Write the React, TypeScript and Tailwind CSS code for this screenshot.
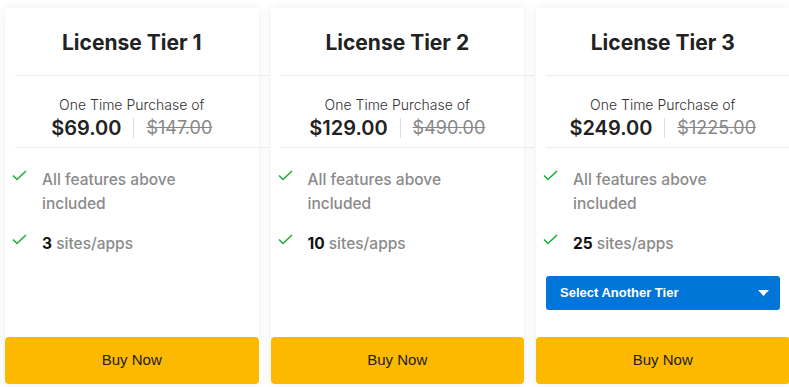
import { useState } from 'react'

interface Tier {
  id: string
  name: string
  price: string
  oldPrice: string
  sites: number
}

const tiers: Tier[] = [
  { id: '1', name: 'License Tier 1', price: '$69.00', oldPrice: '$147.00', sites: 3 },
  { id: '2', name: 'License Tier 2', price: '$129.00', oldPrice: '$490.00', sites: 10 },
  { id: '3', name: 'License Tier 3', price: '$249.00', oldPrice: '$1225.00', sites: 25 },
]

function Check() {
  return (
    <svg width="15" height="11" viewBox="0 0 15 11" className="shrink-0">
      <path d="M1 5.5 L5 9.5 L14 1" fill="none" stroke="#1fae3a" strokeWidth="1.6" />
    </svg>
  )
}

export default function App() {
  const [selected] = useState('3')

  return (
    <div className="min-h-[387px] w-[789px] overflow-hidden bg-white font-['Inter',sans-serif]">
      <div className="flex gap-3 pl-[5px] pt-2">
        {tiers.map((tier) => (
          <div
            key={tier.id}
            className="flex h-[376px] w-[253.5px] shrink-0 flex-col bg-white shadow-[0_0_10px_rgba(0,0,0,0.07)]"
          >
            <h3 className="flex h-[67px] items-center justify-center pt-[2px] text-[21px] font-bold text-[#222]">
              {tier.name}
            </h3>
            <div className="ml-[10px] h-px w-full bg-[#ececec]" />
            <div className="flex h-[71px] flex-col items-center justify-center pt-[12px]">
              <p className="text-[14px] font-light leading-[20px] text-[#333]">One Time Purchase of</p>
              <div className="flex items-center">
                <span className="text-[20px] font-semibold leading-[26px] text-[#222]">{tier.price}</span>
                <span className="mx-3 h-5 w-px bg-[#ddd]" />
                <span className="text-[18px] leading-[26px] text-[#888] line-through">{tier.oldPrice}</span>
              </div>
            </div>
            <div className="ml-[10px] h-px w-full bg-[#ececec]" />
            <ul className="flex flex-col gap-[16px] pl-[7px] pt-[20px] text-[15.5px] font-medium leading-[24px] text-[#8a8a8a]">
              <li className="flex items-start gap-[15px]">
                <span className="pt-[2px]">
                  <Check />
                </span>
                <span className="w-[150px]">All features above included</span>
              </li>
              <li className="flex items-start gap-[15px]">
                <span className="pt-[2px]">
                  <Check />
                </span>
                <span>
                  <b className="font-bold text-[#111]">{tier.sites}</b> sites/apps
                </span>
              </li>
            </ul>
            {tier.id === selected && (
              <button className="mx-[10px] mt-[20px] flex h-[34px] items-center justify-between rounded-[3px] bg-[#0275d8] pl-[14px] pr-[11px] font-['Liberation_Sans',sans-serif] text-[13px] font-bold text-white">
                Select Another Tier
                <svg width="11" height="6" viewBox="0 0 11 6">
                  <path d="M0 0 H11 L5.5 6 Z" fill="white" />
                </svg>
              </button>
            )}
            <button className="mt-auto h-[47px] w-full rounded-[4px] bg-[#fdb900] font-['Liberation_Sans',sans-serif] text-[15px] text-[#222]">
              Buy Now
            </button>
          </div>
        ))}
      </div>
    </div>
  )
}
